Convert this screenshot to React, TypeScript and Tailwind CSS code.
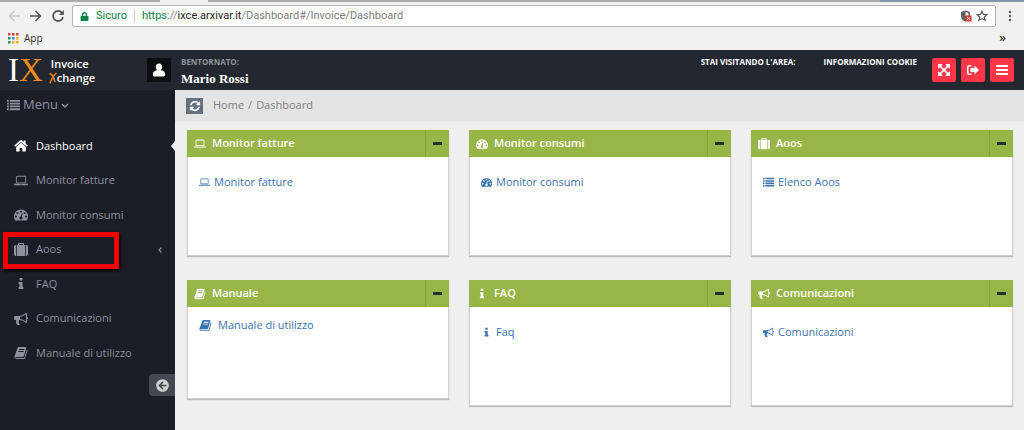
import React from "react";
import { FaArrowCircleLeft, FaLock } from "react-icons/fa";

type Glyph = { box: string; d: string };

const home: Glyph = {
  box: "0 0 14 14",
  d: "M7 3.800l4.800 4V12.500H8.400V9H5.600v3.500H2.200V7.800zM7 .8l2.600 2.200V1.500h2v3.200l2.200 1.900-1 1.200L7 3 1.200 7.800l-1-1.200z",
};
const laptop: Glyph = {
  box: "0 0 1920 1792",
  d: "M416 1216q-66 0-113-47t-47-113v-704q0-66 47-113t113-47h1088q66 0 113 47t47 113v704q0 66-47 113t-113 47h-1088zm-32-864v704q0 13 9.5 22.5t22.5 9.5h1088q13 0 22.5-9.5t9.5-22.5v-704q0-13-9.5-22.5t-22.5-9.5h-1088q-13 0-22.5 9.5t-9.5 22.5zm1376 928h160v96q0 40-47 68t-113 28h-1600q-66 0-113-28t-47-68v-96h1760zm-720 96q16 0 16-16t-16-16h-160q-16 0-16 16t16 16h160z",
};
const gauge: Glyph = {
  box: "0 64 1792 1792",
  d: "M384 1152q0-53-37.5-90.5t-90.5-37.5-90.5 37.5-37.5 90.5 37.5 90.5 90.5 37.5 90.5-37.5 37.5-90.5zm192-448q0-53-37.5-90.5t-90.5-37.5-90.5 37.5-37.5 90.5 37.5 90.5 90.5 37.5 90.5-37.5 37.5-90.5zm428 481l101-382q6-26-7.5-48.5t-38.5-29.5-48 6.5-30 39.5l-101 382q-60 5-107 43.5t-63 98.5q-20 77 20 146t117 89 146-20 89-117q16-60-6-117t-72-91zm660-33q0-53-37.5-90.5t-90.5-37.5-90.5 37.5-37.5 90.5 37.5 90.5 90.5 37.5 90.5-37.5 37.5-90.5zm-640-640q0-53-37.5-90.5t-90.5-37.5-90.5 37.5-37.5 90.5 37.5 90.5 90.5 37.5 90.5-37.5 37.5-90.5zm448 192q0-53-37.5-90.5t-90.5-37.5-90.5 37.5-37.5 90.5 37.5 90.5 90.5 37.5 90.5-37.5 37.5-90.5zm320 448q0 261-141 483-19 29-54 29h-1402q-35 0-54-29-141-221-141-483 0-182 71-348t191-286 286-191 348-71 348 71 286 191 191 286 71 348z",
};
const suitcase: Glyph = {
  box: "0 0 1792 1792",
  d: "M640 256h512v-128h-512v128zm-352 0v1408h-64q-92 0-158-66t-66-158v-960q0-92 66-158t158-66h64zm1120 0v1408h-1024v-1408h128v-160q0-40 28-68t68-28h576q40 0 68 28t28 68v160h128zm384 224v960q0 92-66 158t-158 66h-64v-1408h64q92 0 158 66t66 158z",
};
const info: Glyph = {
  box: "0 0 1792 1792",
  d: "M1216 1344v128q0 26-19 45t-45 19h-512q-26 0-45-19t-19-45v-128q0-26 19-45t45-19h64v-384h-64q-26 0-45-19t-19-45v-128q0-26 19-45t45-19h384q26 0 45 19t19 45v576h64q26 0 45 19t19 45zm-128-1152v192q0 26-19 45t-45 19h-256q-26 0-45-19t-19-45v-192q0-26 19-45t45-19h256q26 0 45 19t19 45z",
};
const bullhorn: Glyph = {
  box: "0 0 1792 1792",
  d: "M1664 640q53 0 90.5 37.5t37.5 90.5-37.5 90.5-90.5 37.5v384q0 52-38 90t-90 38q-417-347-812-380-58 19-91 66t-31 100.5 40 92.5q-20 33-23 65.5t6 58 33.5 55 48 50 61.5 50.5q-29 58-111.5 83t-168.5 11.5-132-55.5q-7-23-29.5-87.5t-32-94.5-23-89-15-101 3.5-98.5 22-110.5h-122q-66 0-113-47t-47-113v-192q0-66 47-113t113-47h480q435 0 896-384 52 0 90 38t38 90v384zm-128 604v-954q-394 302-768 343v270q377 42 768 341z",
};
const book: Glyph = {
  box: "0 0 1792 1792",
  d: "M1703 478q40 57 18 129l-275 906q-19 64-76.5 107.5t-122.5 43.5h-923q-77 0-148.5-53.5t-99.5-131.5q-24-67-2-127 0-4 3-27t4-37q1-8-3-21.5t-3-19.5q2-11 8-21t16.5-23.5 16.5-23.5q23-38 45-91.5t30-91.5q3-10 .5-30t-.5-28q3-11 17-28t17-23q21-36 42-92t25-90q1-9-2.5-32t.5-28q4-13 22-30.5t22-22.5q19-26 42.5-84.5t27.5-96.5q1-8-3-25.5t-2-26.5q2-8 9-18t18-23 17-21q8-12 16.5-30.5t15-35 16-36 19.5-32 26.5-23.5 36-11.5 47.5 5.5l-1 3q38-9 51-9h761q74 0 114 56t18 130l-274 906q-36 119-71.5 153.5t-128.5 34.5h-869q-27 0-38 15-11 16-1 43 24 70 144 70h923q29 0 56-15.5t35-41.5l300-987q7-22 5-57 38 15 59 43zm-1064 2q-4 13 2 22.5t20 9.5h608q13 0 25.5-9.5t16.5-22.5l21-64q4-13-2-22.5t-20-9.5h-608q-13 0-25.5 9.5t-16.5 22.5zm-83 256q-4 13 2 22.5t20 9.5h608q13 0 25.5-9.5t16.5-22.5l21-64q4-13-2-22.5t-20-9.5h-608q-13 0-25.5 9.5t-16.5 22.5z",
};
const refresh: Glyph = {
  box: "0 0 1792 1792",
  d: "M1639 1056q0 5-1 7-64 268-268 434.5t-478 166.5q-146 0-282.5-55t-243.5-157l-129 129q-19 19-45 19t-45-19-19-45v-448q0-26 19-45t45-19h448q26 0 45 19t19 45-19 45l-137 137q71 66 161 102t187 36q134 0 250-65t186-179q11-17 53-117 8-23 30-23h192q13 0 22.5 9.5t9.5 22.5zm25-800v448q0 26-19 45t-45 19h-448q-26 0-45-19t-19-45 19-45l138-138q-148-137-349-137-134 0-250 65t-186 179q-11 17-53 117-8 23-30 23h-199q-13 0-22.5-9.5t-9.5-22.5v-7q65-268 270-434.5t480-166.5q146 0 284 55.5t245 156.5l130-129q19-19 45-19t45 19 19 45z",
};
const expand: Glyph = {
  box: "0 0 1792 1792",
  d: "M1411 541l-355 355 355 355 144-144q29-31 70-14 39 17 39 59v448q0 26-19 45t-45 19h-448q-42 0-59-40-17-39 14-69l144-144-355-355-355 355 144 144q31 30 14 69-17 40-59 40h-448q-26 0-45-19t-19-45v-448q0-42 40-59 39-17 69 14l144 144 355-355-355-355-144 144q-19 19-45 19-12 0-24-5-40-17-40-59v-448q0-26 19-45t45-19h448q42 0 59 40 17 39-14 69l-144 144 355 355 355-355-144-144q-31-30-14-69 17-40 59-40h448q26 0 45 19t19 45v448q0 42-39 59-13 5-25 5-26 0-45-19z",
};
const list: Glyph = {
  box: "0 0 14 14",
  d: "M0 1h2v2H0zM3 1h11v2H3zM0 4h2v2H0zM3 4h11v2H3zM0 7h2v2H0zM3 7h11v2H3zM0 10h2v2H0zM3 10h11v2H3z",
};
const bars: Glyph = { box: "0 0 14 14", d: "M1 2h12v2H1zM1 6h12v2H1zM1 10h12v2H1z" };
const logout: Glyph = {
  box: "0 0 14 14",
  d: "M5.500 2v1.500h-2q-1 0-1 1v5q0 1 1 1h2V12h-2.500Q1 12 1 10V4q0-2 2-2zM8.500 2.500L13 7l-4.500 4.500V9H4.500V5h4z",
};
const user: Glyph = {
  box: "0 0 14 14",
  d: "M7 .5c2 0 3.200 1.500 3.200 3.500 0 1.300-.6 2.500-1.300 3.200 2.600.5 4.300 1.500 4.300 4.300 0 1.400-.9 2-2 2H2.800c-1.100 0-2-.6-2-2 0-2.800 1.700-3.800 4.300-4.300C4.400 6.500 3.800 5.300 3.800 4 3.800 2 5 .5 7 .5z",
};

function Icon({ glyph, className }: { glyph: Glyph; className: string }) {
  return (
    <svg viewBox={glyph.box} className={`shrink-0 ${className}`} fill="currentColor" aria-hidden="true">
      <path d={glyph.d} />
    </svg>
  );
}

function BrowserBar() {
  return (
    <div className="bg-[#f1f1f1] text-xs">
      <div className="flex h-[2px]">
        <div className="w-40 bg-[#a9abad]" />
        <div className="w-12 bg-[#f1f1f1]" />
        <div className="grow bg-[#a9abad]" />
        <div className="w-36 bg-[#8296a8]" />
      </div>
      <div className="flex items-center gap-2 px-2 pt-[3px]">
        <button aria-label="Indietro" className="text-[#c9c9c9]">
          <svg viewBox="0 0 12 12" className="size-3" fill="none" stroke="currentColor" strokeWidth="1.6"><path d="M12 6H1.500M6.500 1L1.500 6l5 5" /></svg>
        </button>
        <button aria-label="Avanti" className="ml-[2px] text-[#555]">
          <svg viewBox="0 0 12 12" className="size-3" fill="none" stroke="currentColor" strokeWidth="1.600"><path d="M0 6h10.500M5.500 1l5 5-5 5" /></svg>
        </button>
        <button aria-label="Ricarica" className="ml-[2px] text-[#555]">
          <svg viewBox="0 0 12 12" className="size-3" fill="none" stroke="currentColor" strokeWidth="1.700"><path d="M10 2.800A5 5 0 1 0 11 7" /><path d="M11.800 0v5H6.800z" fill="currentColor" stroke="none" /></svg>
        </button>
        <div className="flex h-[22px] grow items-center rounded-xs border border-[#b5b5b5] bg-white px-[7px] font-['Roboto','Open_Sans',sans-serif] text-[11px]">
          <FaLock className="size-[9px] text-[#0b8043]" />
          <span className="ml-[7px] text-[#0b8043]">Sicuro</span>
          <span className="mx-[7px] h-3 w-px bg-[#ccc]" />
          <div role="textbox" aria-label="Indirizzo" contentEditable suppressContentEditableWarning className="grow text-[#7d7d7d] outline-none">
            <span className="text-[#0b8043]">https</span>://<span className="text-[#222]">ixce.arxivar.it</span>/Dashboard#/Invoice/Dashboard
          </div>
          <svg viewBox="0 0 12 12" className="size-3" aria-hidden="true">
            <path d="M5.500.5L10 2v4c0 3-2 5-4.500 5.500C3 11 1 9 1 6V2z" fill="#606060" />
            <path d="M5.500 2L8.500 3v3H5.500z" fill="#eee" />
            <path d="M5.500 5.500h6v6h-6z" fill="#d23f31" />
            <path d="M7 7l3 3M10 7l-3 3" stroke="#fff" />
          </svg>
          <button aria-label="Preferiti" className="ml-1 text-[#555]">
            <svg viewBox="0 0 12 12" className="size-3" fill="none" stroke="currentColor" strokeWidth="1.200"><path d="M6 1.200l1.400 3.200 3.500.3-2.600 2.300.8 3.400L6 8.600l-3.100 1.800.8-3.400L1.100 4.700l3.500-.3z" /></svg>
          </button>
        </div>
        <button aria-label="Altro" className="mx-1 text-[#555]">
          <svg viewBox="0 0 4 12" className="h-3 w-1" fill="currentColor"><circle cx="2" cy="2" r="1.200" /><circle cx="2" cy="6" r="1.200" /><circle cx="2" cy="10" r="1.200" /></svg>
        </button>
      </div>
      <div className="flex h-[23px] items-center justify-between pr-4 pl-2 text-[#333]">
        <a href="#app" className="flex items-center gap-[5px] text-[10px]">
          <svg viewBox="0 0 11 11" className="size-[11px]" aria-hidden="true">
            <path d="M0 0h2.500v2.500H0zM4 0h2.500v2.500H4zM8 0h2.500v2.500H8z" fill="#db4437" />
            <path d="M0 4h2.500v2.500H0z" fill="#0f9d58" /><path d="M4 4h2.500v2.500H4z" fill="#4285f4" /><path d="M8 4h2.500v2.500H8z" fill="#f4b400" />
            <path d="M0 8h2.500v2.500H0z" fill="#0f9d58" /><path d="M4 8h2.500v2.500H4zM8 8h2.500v2.500H8z" fill="#f4b400" />
          </svg>
          App
        </a>
        <button aria-label="Altri preferiti" className="pr-[2px] pb-[2px] text-xs font-semibold">»</button>
      </div>
    </div>
  );
}

const actions: { label: string; glyph: Glyph }[] = [
  { label: "Schermo intero", glyph: expand },
  { label: "Esci", glyph: logout },
  { label: "Opzioni", glyph: bars },
];

function Header() {
  return (
    <header className="flex h-10 items-center bg-[#23272f] pr-[10px] pl-2 text-white">
      <a href="#home" className="flex w-[139px] items-center gap-2">
        <span className="font-['Liberation_Serif',serif] text-[33px] leading-8">I<span className="text-[#f08a1c]">X</span></span>
        <span className="flex flex-col pt-[2px] text-[11px] leading-[14px] font-semibold">
          <span>Invoice</span>
          <span className="flex items-center">
            <svg viewBox="0 0 8 12" className="-ml-[2px] h-3 w-2" fill="none" stroke="#f08a1c" strokeWidth="1.500" aria-hidden="true"><path d="M.5 1.500C3 2 5 6 6 10M7.500 1C4 4 2 8 1 11.500" /></svg>
            change
          </span>
        </span>
      </a>
      <div className="flex size-6 items-center justify-center bg-[#0d0f12]">
        <Icon glyph={user} className="size-[14px]" />
      </div>
      <div className="ml-[10px] flex grow flex-col self-start pt-[5px]">
        <span className="text-[8px] leading-[14px] font-bold text-[#8f939b]">BENTORNATO:</span>
        <span className="font-['Liberation_Serif',serif] text-[13px] leading-5 font-bold">Mario Rossi</span>
      </div>
      <div className="flex gap-7 self-start pt-[5px] text-[8px] leading-[14px] font-bold">
        <span>STAI VISITANDO L'AREA:</span>
        <a href="#cookie">INFORMAZIONI COOKIE</a>
      </div>
      <div className="ml-[15px] flex gap-[5px]">
        {actions.map((a) => (
          <button key={a.label} aria-label={a.label} className="flex size-6 items-center justify-center rounded-xs bg-[#ff3648]">
            <Icon glyph={a.glyph} className="size-[14px]" />
          </button>
        ))}
      </div>
    </header>
  );
}

const menu: { label: string; glyph: Glyph; active?: boolean; marked?: boolean }[] = [
  { label: "Dashboard", glyph: home, active: true },
  { label: "Monitor fatture", glyph: laptop },
  { label: "Monitor consumi", glyph: gauge },
  { label: "Aoos", glyph: suitcase, marked: true },
  { label: "FAQ", glyph: info },
  { label: "Comunicazioni", glyph: bullhorn },
  { label: "Manuale di utilizzo", glyph: book },
];

function Sidebar() {
  return (
    <aside className="w-[175px] shrink-0 bg-[#1b1e26] text-[#8d909d]">
      <button className="flex h-[30px] items-center gap-[3px] pl-[7px] text-[13px]">
        <Icon glyph={list} className="size-[13px]" />
        Menu
        <svg viewBox="0 0 8 8" className="mt-[2px] size-2" fill="none" stroke="currentColor" strokeWidth="1.400" aria-hidden="true"><path d="M1 2l3 3 3-3" /></svg>
      </button>
      <nav className="mt-[9px] flex h-[241px] flex-col justify-between text-[11px]">
        {menu.map((m) => (
          <a key={m.label} href="#menu" className={`relative flex h-[34px] items-center gap-2 pl-[14px] ${m.active ? "text-white" : ""}`}>
            <Icon glyph={m.glyph} className="size-[14px]" />
            <span className="grow">{m.label}</span>
            {m.active && (
              <svg viewBox="0 0 4 10" className="h-[10px] w-1" fill="#eee" aria-hidden="true"><path d="M4 0v10L0 5z" /></svg>
            )}
            {m.marked && (
              <>
                <svg viewBox="0 0 6 8" className="mr-3 h-2 w-[6px]" fill="none" stroke="currentColor" strokeWidth="1.200" aria-hidden="true"><path d="M4.500 1.500L2 4l2.500 2.500" /></svg>
                <span className="absolute -top-px left-[3px] h-[37px] w-[116px] border-5 border-[#f20000] shadow-[1px_2px_3px_#000]" />
              </>
            )}
          </a>
        ))}
      </nav>
      <div className="mt-1 flex justify-end">
        <button aria-label="Riduci menu" className="flex h-[22px] w-[26px] items-center justify-center rounded-l-sm bg-[#444850] text-[#d0d0d0]">
          <FaArrowCircleLeft className="size-[13px]" />
        </button>
      </div>
    </aside>
  );
}

const cards: { title: string; glyph: Glyph; link: string; linkGlyph: Glyph; body: string; linkIcon: string }[] = [
  { title: "Monitor fatture", glyph: laptop, link: "Monitor fatture", linkGlyph: laptop, body: "h-[99px] pt-4", linkIcon: "size-[11px]" },
  { title: "Monitor consumi", glyph: gauge, link: "Monitor consumi", linkGlyph: gauge, body: "h-[99px] pt-4", linkIcon: "size-[11px]" },
  { title: "Aoos", glyph: suitcase, link: "Elenco Aoos", linkGlyph: list, body: "h-[99px] pt-4", linkIcon: "size-[11px]" },
  { title: "Manuale", glyph: book, link: "Manuale di utilizzo", linkGlyph: book, body: "h-[92px] pt-[9px]", linkIcon: "mr-[2px] size-[13px]" },
  { title: "FAQ", glyph: info, link: "Faq", linkGlyph: info, body: "h-[99px] pt-4", linkIcon: "size-[11px]" },
  { title: "Comunicazioni", glyph: bullhorn, link: "Comunicazioni", linkGlyph: bullhorn, body: "h-[99px] pt-4", linkIcon: "size-[11px]" },
];

function Card({ card }: { card: (typeof cards)[number] }) {
  return (
    <section className="shadow-[0_1px_1px_#bbb]">
      <div className="flex h-[27px] items-center bg-[#98b548] text-white">
        <Icon glyph={card.glyph} className="ml-[7px] size-3" />
        <h2 className="ml-[6px] grow text-[11px] font-semibold">{card.title}</h2>
        <button aria-label={`Riduci ${card.title}`} className="flex h-full w-6 items-center justify-center border-l border-[#88a43c]">
          <span className="h-[3px] w-[9px] bg-[#23302f]" />
        </button>
      </div>
      <div className={`border border-t-0 border-[#d0d0d0] bg-white pl-[11px] ${card.body}`}>
        <a href="#link" className="flex h-[18px] items-center gap-1 text-[11px] text-[#3b73af]">
          <Icon glyph={card.linkGlyph} className={card.linkIcon} />
          {card.link}
        </a>
      </div>
    </section>
  );
}

export default function App() {
  return (
    <div className="flex min-h-screen flex-col bg-[#efefef] font-['Open_Sans','Noto_Sans',sans-serif]">
      <BrowserBar />
      <Header />
      <div className="flex grow">
        <Sidebar />
        <main className="min-w-0 grow">
          <div className="flex h-8 items-center border-b border-[#e9e9e9] bg-[#e4e4e4] pl-[11px] text-[11px] text-[#808080]">
            <button aria-label="Aggiorna" className="mr-[10px] flex h-4 w-[17px] items-center justify-center bg-[#657080] text-white">
              <Icon glyph={refresh} className="size-3" />
            </button>
            <a href="#home">Home</a>
            <span className="mx-1">/</span>
            <span>Dashboard</span>
          </div>
          <div className="grid grid-cols-3 items-start gap-x-5 gap-y-6 pt-2 pr-[11px] pb-6 pl-3">
            {cards.map((c, i) => (
              <Card key={i} card={c} />
            ))}
          </div>
        </main>
      </div>
    </div>
  );
}
